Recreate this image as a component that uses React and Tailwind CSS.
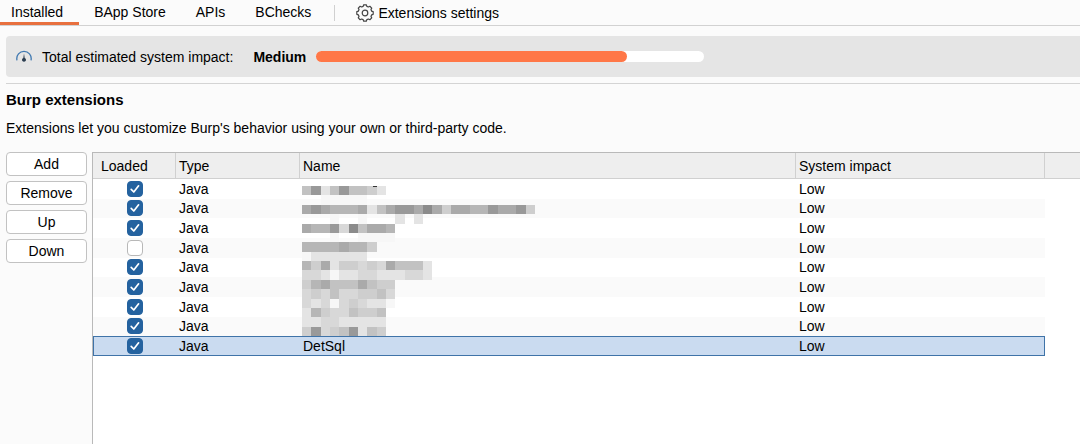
import React, { useState } from "react";

const tabs = ["Installed", "BApp Store", "APIs", "BChecks"];
const actions = ["Add", "Remove", "Up", "Down"];

const extensions = [
  { name: "", loaded: true },
  { name: "", loaded: true },
  { name: "", loaded: true },
  { name: "", loaded: false },
  { name: "", loaded: true },
  { name: "", loaded: true },
  { name: "", loaded: true },
  { name: "", loaded: true },
  { name: "DetSql", loaded: true },
];

// Each digit is the shade of one block of the pixelated names, dark to light.
const shades = ["#8b8b8b", "#999999", "#aaaaaa", "#b6b6b6", "#c2c2c2", "#cecece", "#d8d8d8", "#e4e4e4", "#f7f7f7"];
const mosaic = [
  "417414457",
  "..88888",
  "2123332742112025223312215",
  "...8..8...7.7",
  "2331604223",
  "...8..8888",
  "33332335",
  "8777777",
  "35275565624447",
  "66787766777667",
  "5324442455",
  "6564665546",
  "6768656778",
  "735664554",
  "776677777",
  "516541745",
];

function Mosaic() {
  return (
    <svg
      className="pointer-events-none absolute top-[6px] left-[2px] z-10 h-[150px] w-[233px]"
      viewBox="0 0 25 16"
      preserveAspectRatio="none"
      shapeRendering="crispEdges"
      aria-hidden="true"
    >
      {mosaic.map((line, y) =>
        [...line].map((c, x) =>
          c === "." ? null : <rect key={`${x}-${y}`} x={x} y={y} width="1" height="1" fill={shades[Number(c)]} />
        )
      )}
      <rect x="7.6" y="0" width="0.5" height="0.14" fill="#333" />
    </svg>
  );
}

function GearIcon() {
  const teeth = 8;
  const points = [];
  for (let i = 0; i < teeth; i++) {
    const a = (i * 2 * Math.PI) / teeth;
    [[-0.27, 6.9], [-0.16, 8.3], [0.16, 8.3], [0.27, 6.9]].forEach(([d, r]) =>
      points.push(`${(9 + r * Math.sin(a + d)).toFixed(2)},${(9 - r * Math.cos(a + d)).toFixed(2)}`)
    );
  }
  return (
    <svg className="h-[18px] w-[18px]" viewBox="0 0 18 18" fill="none" stroke="#444" strokeWidth="1.2" strokeLinejoin="round" aria-hidden="true">
      <polygon points={points.join(" ")} />
      <circle cx="9" cy="9" r="2.8" />
    </svg>
  );
}

function GaugeIcon() {
  return (
    <svg className="h-4 w-4" viewBox="0 0 16 16" fill="none" aria-hidden="true">
      <path d="M0.9 10.8A7.2 7.2 0 1 1 15.1 10.8" stroke="#3f78b0" strokeWidth="1.3" strokeLinecap="round" />
      <path d="M8 4.6L8.7 8.9A2 2 0 1 1 7.3 8.9Z" fill="#2b3d50" />
    </svg>
  );
}

function LoadedBox({ loaded, label }) {
  return (
    <label className="mx-auto grid h-4 w-4 place-items-center">
      <input
        type="checkbox"
        defaultChecked={loaded}
        aria-label={label}
        className="peer col-start-1 row-start-1 h-4 w-4 appearance-none rounded border border-[#b8b8b8] bg-white checked:border-[#24629f] checked:bg-[#24629f]"
      />
      <svg className="pointer-events-none invisible col-start-1 row-start-1 h-4 w-4 peer-checked:visible" viewBox="0 0 16 16" fill="none" aria-hidden="true">
        <path d="M4.2 8.4L6.8 11L11.6 4.8" stroke="white" strokeWidth="1.7" strokeLinecap="round" strokeLinejoin="round" />
      </svg>
    </label>
  );
}

export default function App() {
  const [selected, setSelected] = useState(8);
  return (
    <div className="flex min-h-screen flex-col bg-[#fbfbfb] font-['Liberation_Sans',Arial,sans-serif] text-sm leading-4 text-black">
      <nav className="flex h-[26px] items-stretch border-b border-[#d2d2d2]">
        <div role="tablist" className="flex">
          {tabs.map((tab, i) => (
            <button
              key={tab}
              role="tab"
              aria-selected={i === 0}
              className={
                i === 0
                  ? "border-b-[3px] border-[#e8703f] pt-0.5 pr-4 pl-[11px]"
                  : "border-b-[3px] border-transparent px-[15px] pt-0.5"
              }
            >
              {tab}
            </button>
          ))}
        </div>
        <span className="ml-2 h-4 w-px self-center bg-[#d0d0d0]" />
        <button className="ml-[21px] flex items-center gap-1">
          <GearIcon />
          Extensions settings
        </button>
      </nav>

      <section className="mt-2.5 ml-1.5 flex h-[41px] items-center rounded-l bg-[#e5e5e5] pl-2.5">
        <GaugeIcon />
        <span className="ml-2.5">Total estimated system impact:</span>
        <strong className="ml-5">Medium</strong>
        <div
          role="progressbar"
          aria-label="Total estimated system impact"
          aria-valuenow={80}
          className="ml-2.5 h-[11px] w-[388px] rounded-full bg-white"
        >
          <div className="h-full w-4/5 rounded-full bg-[#ff7747]" />
        </div>
      </section>

      <main className="mt-1.5 ml-1.5 flex flex-1 flex-col border-t border-[#d4d4d4]">
        <h1 className="mt-2 text-[15px] leading-4 font-bold">Burp extensions</h1>
        <p className="mt-3">Extensions let you customize Burp's behavior using your own or third-party code.</p>

        <div className="mt-4 flex flex-1 gap-[5px]">
          <div className="flex w-[81px] shrink-0 flex-col gap-[5px]">
            {actions.map((action) => (
              <button key={action} className="h-6 rounded border border-[#c2c2c2] bg-white">
                {action}
              </button>
            ))}
          </div>

          <div className="flex-1 border-t border-l border-[#b9b9b9] bg-white">
            <table className="h-[203px] w-full table-fixed border-separate border-spacing-0 text-left">
              <colgroup>
                <col className="w-[83px]" />
                <col className="w-[124px]" />
                <col />
                <col className="w-[249px]" />
                <col className="w-[35px]" />
              </colgroup>
              <thead className="bg-[#eeeeee]">
                <tr className="h-[26px]">
                  {["Loaded", "Type", "Name", "System impact"].map((title, i) => (
                    <th
                      key={title}
                      className={
                        i === 0
                          ? "border-r border-b border-[#d0d0d0] p-0 pl-2 font-normal"
                          : "border-r border-b border-[#d0d0d0] p-0 pl-[3px] font-normal"
                      }
                    >
                      {title}
                    </th>
                  ))}
                  <td className="border-b border-[#d0d0d0] p-0" />
                </tr>
              </thead>
              <tbody>
                {extensions.map((ext, i) => {
                  const edge =
                    i === selected
                      ? "border-y border-[#3f73a8] bg-[#cadbf0]"
                      : i % 2
                        ? "border-y border-transparent bg-[#fafafa]"
                        : "border-y border-transparent bg-white";
                  return (
                    <tr key={i} onClick={() => setSelected(i)}>
                      <td className={`${edge} ${i === selected ? "border-l" : ""} p-0`}>
                        <LoadedBox loaded={ext.loaded} label={`Loaded, row ${i + 1}`} />
                      </td>
                      <td className={`${edge} p-0 pl-[3px]`}>Java</td>
                      <td className={`${edge} relative p-0 pl-[3px]`}>
                        {ext.name}
                        {i === 0 && <Mosaic />}
                      </td>
                      <td className={`${edge} ${i === selected ? "border-r" : ""} p-0 pl-[3px]`}>Low</td>
                      <td className="p-0" />
                    </tr>
                  );
                })}
              </tbody>
            </table>
          </div>
        </div>
      </main>
    </div>
  );
}
